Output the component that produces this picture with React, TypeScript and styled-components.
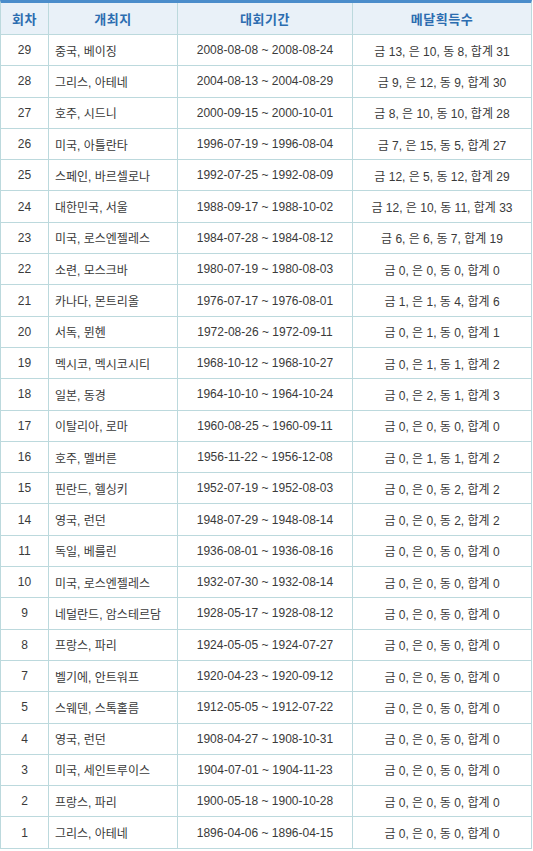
import React from "react";
import styled, { createGlobalStyle } from "styled-components";

const GlobalStyle = createGlobalStyle`
  html, body { margin: 0; padding: 0; background: #ffffff; }
  body { font-family: "Liberation Sans", "Noto Sans CJK KR", sans-serif; }
  * { box-sizing: border-box; }
`;

type Row = { no: string; place: string; period: string; medals: string };

const zero = "금 0, 은 0, 동 0, 합계 0";

const rows: Row[] = [
  { no: "29", place: "중국, 베이징", period: "2008-08-08 ~ 2008-08-24", medals: "금 13, 은 10, 동 8, 합계 31" },
  { no: "28", place: "그리스, 아테네", period: "2004-08-13 ~ 2004-08-29", medals: "금 9, 은 12, 동 9, 합계 30" },
  { no: "27", place: "호주, 시드니", period: "2000-09-15 ~ 2000-10-01", medals: "금 8, 은 10, 동 10, 합계 28" },
  { no: "26", place: "미국, 아틀란타", period: "1996-07-19 ~ 1996-08-04", medals: "금 7, 은 15, 동 5, 합계 27" },
  { no: "25", place: "스페인, 바르셀로나", period: "1992-07-25 ~ 1992-08-09", medals: "금 12, 은 5, 동 12, 합계 29" },
  { no: "24", place: "대한민국, 서울", period: "1988-09-17 ~ 1988-10-02", medals: "금 12, 은 10, 동 11, 합계 33" },
  { no: "23", place: "미국, 로스엔젤레스", period: "1984-07-28 ~ 1984-08-12", medals: "금 6, 은 6, 동 7, 합계 19" },
  { no: "22", place: "소련, 모스크바", period: "1980-07-19 ~ 1980-08-03", medals: zero },
  { no: "21", place: "카나다, 몬트리올", period: "1976-07-17 ~ 1976-08-01", medals: "금 1, 은 1, 동 4, 합계 6" },
  { no: "20", place: "서독, 뮌헨", period: "1972-08-26 ~ 1972-09-11", medals: "금 0, 은 1, 동 0, 합계 1" },
  { no: "19", place: "멕시코, 멕시코시티", period: "1968-10-12 ~ 1968-10-27", medals: "금 0, 은 1, 동 1, 합계 2" },
  { no: "18", place: "일본, 동경", period: "1964-10-10 ~ 1964-10-24", medals: "금 0, 은 2, 동 1, 합계 3" },
  { no: "17", place: "이탈리아, 로마", period: "1960-08-25 ~ 1960-09-11", medals: zero },
  { no: "16", place: "호주, 멜버른", period: "1956-11-22 ~ 1956-12-08", medals: "금 0, 은 1, 동 1, 합계 2" },
  { no: "15", place: "핀란드, 헬싱키", period: "1952-07-19 ~ 1952-08-03", medals: "금 0, 은 0, 동 2, 합계 2" },
  { no: "14", place: "영국, 런던", period: "1948-07-29 ~ 1948-08-14", medals: "금 0, 은 0, 동 2, 합계 2" },
  { no: "11", place: "독일, 베를린", period: "1936-08-01 ~ 1936-08-16", medals: zero },
  { no: "10", place: "미국, 로스엔젤레스", period: "1932-07-30 ~ 1932-08-14", medals: zero },
  { no: "9", place: "네덜란드, 암스테르담", period: "1928-05-17 ~ 1928-08-12", medals: zero },
  { no: "8", place: "프랑스, 파리", period: "1924-05-05 ~ 1924-07-27", medals: zero },
  { no: "7", place: "벨기에, 안트워프", period: "1920-04-23 ~ 1920-09-12", medals: zero },
  { no: "5", place: "스웨덴, 스톡홀름", period: "1912-05-05 ~ 1912-07-22", medals: zero },
  { no: "4", place: "영국, 런던", period: "1908-04-27 ~ 1908-10-31", medals: zero },
  { no: "3", place: "미국, 세인트루이스", period: "1904-07-01 ~ 1904-11-23", medals: zero },
  { no: "2", place: "프랑스, 파리", period: "1900-05-18 ~ 1900-10-28", medals: zero },
  { no: "1", place: "그리스, 아테네", period: "1896-04-06 ~ 1896-04-15", medals: zero },
];

const BORDER = "#bcd9dd";

const Table = styled.div`
  width: 532px;
  border-left: 1px solid ${BORDER};
  border-right: 1px solid ${BORDER};
  border-top: 3px solid #4b8dcb;
`;

const Grid = styled.div<{ $head?: boolean }>`
  display: grid;
  grid-template-columns: 48px 129px 175px 178px;
  height: ${(p) => (p.$head ? "32px" : "31.3px")};
  border-bottom: 1px solid ${BORDER};
  background: ${(p) => (p.$head ? "#e9f1f8" : "#ffffff")};
`;

const HeadCell = styled.div<{ $last?: boolean }>`
  display: flex;
  align-items: center;
  justify-content: center;
  border-right: ${(p) => (p.$last ? "none" : `1px solid ${BORDER}`)};
  color: #2c6db0;
  font-weight: bold;
  font-size: 13px;
  letter-spacing: 0.5px;
`;

const Cell = styled.div<{ $align?: "left" | "center"; $last?: boolean }>`
  display: flex;
  align-items: center;
  justify-content: ${(p) => (p.$align === "left" ? "flex-start" : "center")};
  padding-left: ${(p) => (p.$align === "left" ? "6px" : "0")};
  border-right: ${(p) => (p.$last ? "none" : `1px solid ${BORDER}`)};
  color: #3a3a3a;
  font-size: 12px;
  white-space: nowrap;
`;

export default function App() {
  return (
    <>
      <GlobalStyle />
      <Table>
        <Grid $head>
          <HeadCell>회차</HeadCell>
          <HeadCell>개최지</HeadCell>
          <HeadCell>대회기간</HeadCell>
          <HeadCell $last>메달획득수</HeadCell>
        </Grid>
        {rows.map((r) => (
          <Grid key={r.no}>
            <Cell>{r.no}</Cell>
            <Cell $align="left">{r.place}</Cell>
            <Cell>{r.period}</Cell>
            <Cell $last>{r.medals}</Cell>
          </Grid>
        ))}
      </Table>
    </>
  );
}
